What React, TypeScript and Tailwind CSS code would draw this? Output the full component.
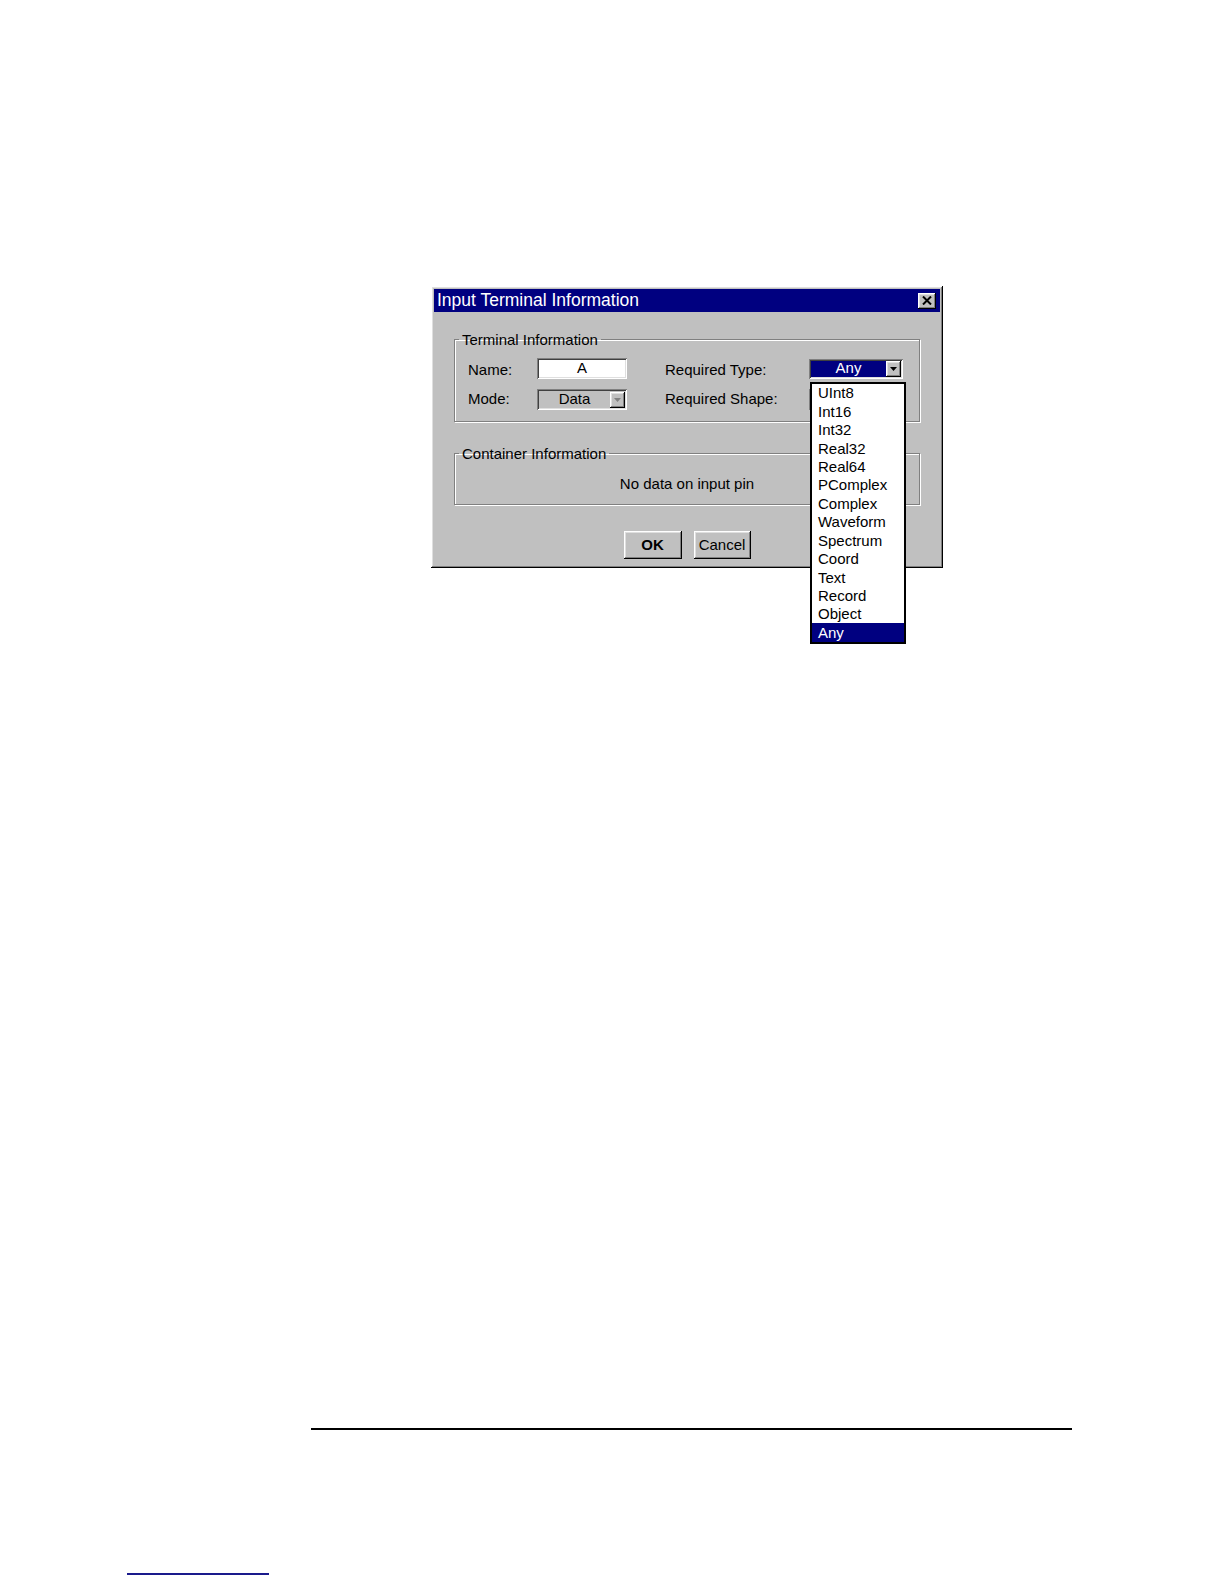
import React from 'react';

const typeOptions = [
  'UInt8',
  'Int16',
  'Int32',
  'Real32',
  'Real64',
  'PComplex',
  'Complex',
  'Waveform',
  'Spectrum',
  'Coord',
  'Text',
  'Record',
  'Object',
  'Any',
];

// classic 3D bevels
const raised =
  'shadow-[inset_-1px_-1px_0_#000,inset_1px_1px_0_#fff,inset_-2px_-2px_0_#808080,inset_2px_2px_0_#dfdfdf]';
const sunken =
  'shadow-[inset_1px_1px_0_#808080,inset_-1px_-1px_0_#fff,inset_2px_2px_0_#404040,inset_-2px_-2px_0_#dfdfdf]';

const ArrowButton = ({ disabled = false }: { disabled?: boolean }) => (
  <div className={`flex h-[16px] w-[15px] items-center justify-center bg-[#c0c0c0] ${raised}`}>
    <svg width="7" height="4" viewBox="0 0 7 4">
      <path d="M0 0h7L3.5 4z" fill={disabled ? '#808080' : '#000'} />
    </svg>
  </div>
);

const App = () => {
  return (
    <div className="flex h-[1584px] w-[1224px] flex-col bg-white font-['Liberation_Sans',Arial,sans-serif] text-[15px] text-black">
      {/* dialog */}
      <div className={`ml-[431px] mt-[286px] flex w-[512px] flex-col bg-[#c0c0c0] p-[3px] ${raised}`}>
        <div className="flex h-[23px] items-center justify-between bg-[#000080] pl-[3px] pr-[4px]">
          <span className="text-[17.5px] leading-none text-white">Input Terminal Information</span>
          <div className={`flex h-[16px] w-[18px] items-center justify-center bg-[#c0c0c0] ${raised}`}>
            <svg width="10" height="9" viewBox="0 0 10 9">
              <path d="M1 0.5l8 8M9 0.5l-8 8" stroke="#000" strokeWidth="2" />
            </svg>
          </div>
        </div>

        <fieldset className="mx-[20px] mt-[19px] border border-[#808080] p-0 shadow-[inset_1px_1px_0_#fff,1px_1px_0_#fff]">
          <legend className="ml-[4px] px-[3px] leading-[17px]">Terminal Information</legend>
          <div className="flex flex-col gap-[10px] pb-[11px] pl-[13px] pt-[10px]">
            <div className="flex h-[21px] items-center">
              <span className="mt-[4px] w-[69px]">Name:</span>
              <div className={`flex h-[21px] w-[90px] items-center justify-center bg-white ${sunken}`}>A</div>
              <span className="ml-[38px] mt-[4px] w-[144px]">Required Type:</span>
              <div className="relative">
                <div className={`flex h-[20px] w-[94px] items-center p-[2px] ${sunken}`}>
                  <div className="flex h-full flex-1 items-center justify-center bg-[#000080] text-white">Any</div>
                  <ArrowButton />
                </div>
                <div className="absolute left-[1px] top-[23px] z-10 flex w-[96px] flex-col border-2 border-black bg-white">
                  {typeOptions.map((opt) => (
                    <div
                      key={opt}
                      className={`flex h-[18.45px] items-center pl-[6px] leading-none ${
                        opt === 'Any' ? 'bg-[#000080] text-white' : ''
                      }`}
                    >
                      {opt}
                    </div>
                  ))}
                </div>
              </div>
            </div>
            <div className="flex h-[21px] items-center">
              <span className="w-[69px]">Mode:</span>
              <div className={`flex h-[21px] w-[90px] items-center p-[2px] ${sunken}`}>
                <span className="flex-1 text-center">Data</span>
                <ArrowButton disabled />
              </div>
              <span className="ml-[38px] w-[144px]">Required Shape:</span>
              <div className={`h-[21px] w-[94px] ${sunken}`} />
            </div>
          </div>
        </fieldset>

        <fieldset className="mx-[20px] mt-[23px] border border-[#808080] p-0 shadow-[inset_1px_1px_0_#fff,1px_1px_0_#fff]">
          <legend className="ml-[4px] px-[3px] leading-[17px]">Container Information</legend>
          <div className="pb-[12px] pt-[13px] text-center leading-[17px]">No data on input pin</div>
        </fieldset>

        <div className="mb-[6px] mt-[26px] flex justify-center gap-[12px]">
          <button className={`h-[28px] w-[58px] bg-[#c0c0c0] font-bold ${raised}`}>OK</button>
          <button className={`h-[28px] w-[57px] bg-[#c0c0c0] ${raised}`}>Cancel</button>
        </div>
      </div>

      {/* page footer rule */}
      <div className="ml-[311px] mt-[860px] h-[2px] w-[761px] bg-black" />
      <div className="ml-[127px] mt-[143px] h-[2px] w-[142px] bg-[#1a1a8c]" />
    </div>
  );
};

export default App;
